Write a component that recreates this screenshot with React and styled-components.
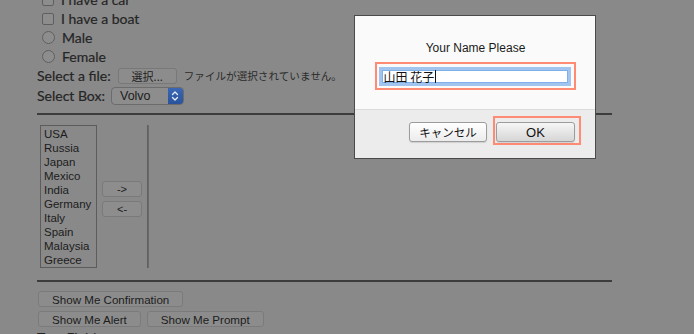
import React from "react";
import styled, { createGlobalStyle } from "styled-components";

const GlobalStyle = createGlobalStyle`
  html, body { margin: 0; padding: 0; background: #898989; overflow: hidden; }
  body { width: 694px; height: 334px; }
  * { box-sizing: border-box; }
`;

const Page = styled.div`
  position: relative;
  width: 694px;
  height: 334px;
  overflow: hidden;
  background: #898989;
  font-family: Lato, "DejaVu Sans", sans-serif;
  color: #252525;
`;

const Content = styled.div`
  margin-top: -10px;
  padding-left: 37px;
  width: 612px;
`;

const OptionRow = styled.div`
  display: flex;
  align-items: center;
  gap: 7px;
  height: 19px;
  padding-left: 5px;
  font-size: 14px;
  -webkit-text-stroke: 0.2px #252525;
`;

const CheckBox = styled.span`
  width: 12px;
  height: 12px;
  border: 1px solid #5f5f5f;
  border-radius: 2px;
  background: #8d8d8d;
`;

const Radio = styled.span`
  width: 13px;
  height: 13px;
  border: 1px solid #5f5f5f;
  border-radius: 50%;
  background: #8d8d8d;
`;

const FieldRow = styled.div`
  display: flex;
  align-items: center;
  height: ${(p) => p.$h || 19}px;
  font-size: 14px;
`;

const FieldLabel = styled.span`
  margin-right: ${(p) => p.$gap || 6}px;
  white-space: nowrap;
  -webkit-text-stroke: 0.2px #252525;
`;

const FileButton = styled.span`
  display: flex;
  align-items: center;
  justify-content: center;
  width: 59px;
  height: 16px;
  border: 1px solid #787878;
  border-radius: 3px;
  background: #8c8c8c;
  font-family: "Noto Sans CJK JP", sans-serif;
  font-size: 11px;
  color: #222;
`;

const FileNote = styled.span`
  margin-left: 7px;
  font-family: "Noto Sans CJK JP", sans-serif;
  font-size: 10.6px;
  color: #2b2b2b;
  white-space: nowrap;
`;

const SelectBox = styled.div`
  display: flex;
  width: 73px;
  height: 18px;
  border: 1px solid #6c6c6c;
  border-radius: 4px;
  background: #8d8d8d;
  overflow: hidden;
`;

const SelectValue = styled.span`
  flex: 1;
  display: flex;
  align-items: center;
  padding-left: 8px;
  font-family: "Liberation Sans", Arial, sans-serif;
  font-size: 12.5px;
  color: #1c1c1c;
`;

const SelectArrow = styled.span`
  width: 15px;
  display: flex;
  align-items: center;
  justify-content: center;
  background: linear-gradient(#3a66b4, #2a539c);
`;

const Rule = styled.div`
  height: 2px;
  width: 575px;
  background: #3c3c3c;
  margin-top: ${(p) => p.$mt}px;
`;

const TransferArea = styled.div`
  display: flex;
  gap: 5px;
  margin-top: 10px;
  padding-left: 3px;
  height: 143px;
`;

const ListBox = styled.div`
  width: 57px;
  border: 1px solid #5c5c5c;
  padding: 1px 0 0 3px;
  font-family: "Liberation Sans", Arial, sans-serif;
  font-size: 11.5px;
  line-height: 14px;
  color: #1c1c1c;
`;

const MoveButtons = styled.div`
  display: flex;
  flex-direction: column;
  gap: 4px;
  align-self: center;
  margin-top: 4px;
`;

const SmallButton = styled.span`
  display: flex;
  align-items: center;
  justify-content: center;
  width: 40px;
  height: 16px;
  border: 1px solid #7a7a7a;
  border-radius: 3px;
  background: #8d8d8d;
  font-family: "Liberation Sans", Arial, sans-serif;
  font-size: 11px;
  color: #1c1c1c;
`;

const EmptyList = styled.div`
  width: 2px;
  border-left: 1px solid #606060;
  border-right: 1px solid #6a6a6a;
`;

const ButtonRow = styled.div`
  display: flex;
  gap: 6px;
  margin-top: ${(p) => p.$mt}px;
  padding-left: 1px;
`;

const PageButton = styled.span`
  display: flex;
  align-items: center;
  height: 16px;
  padding: 0 13px;
  border: 1px solid #7b7b7b;
  border-radius: 3px;
  background: #8c8c8c;
  font-family: "Liberation Sans", Arial, sans-serif;
  font-size: 11.6px;
  color: #1c1c1c;
  white-space: nowrap;
`;

const TailLabel = styled.div`
  margin-top: 2px;
  font-size: 14px;
`;

const Dialog = styled.div`
  position: absolute;
  left: 354px;
  top: 15px;
  width: 242px;
  height: 144px;
  border: 1px solid #4a4a4a;
  display: flex;
  flex-direction: column;
  font-family: "Liberation Sans", Arial, "Noto Sans CJK JP", sans-serif;
  color: #1a1a1a;
`;

const DialogBody = styled.div`
  height: 93px;
  background: #fafafa;
  display: flex;
  flex-direction: column;
  align-items: center;
  padding-top: 25px;
`;

const DialogTitle = styled.div`
  font-size: 12px;
  line-height: 15px;
  margin-left: 1px;
`;

const Highlight = styled.div`
  border: 2px solid #ff8b75;
  padding: ${(p) => p.$pad};
  margin-top: ${(p) => p.$mt || 0}px;
`;

const NameInput = styled.div`
  width: 192px;
  height: 19px;
  background: #fff;
  border: 3px solid #a2c5ef;
  box-shadow: inset 0 0 0 1px #7fb0ea;
  display: flex;
  align-items: center;
  padding-left: 2px;
  font-family: "Noto Sans CJK JP", sans-serif;
  font-size: 12px;
  color: #111;
`;

const Caret = styled.span`
  width: 1px;
  height: 13px;
  background: #111;
  margin-left: 1px;
`;

const DialogFooter = styled.div`
  flex: 1;
  background: #ececec;
  border-top: 1px solid #dcdcdc;
  display: flex;
  justify-content: flex-end;
  align-items: flex-start;
  gap: 6px;
  padding: 6px 14px 0 0;
`;

const DialogButton = styled.span`
  display: flex;
  align-items: center;
  justify-content: center;
  width: ${(p) => p.$w}px;
  height: 20px;
  margin-top: ${(p) => p.$mt || 0}px;
  border: 1px solid #9c9c9c;
  border-radius: 3px;
  background: ${(p) =>
    p.$primary
      ? "linear-gradient(#f6f6f6, #d6d6d6)"
      : "linear-gradient(#ffffff, #ececec)"};
  box-shadow: 0 1px 1px rgba(0, 0, 0, 0.12);
  font-family: ${(p) =>
    p.$primary ? '"Liberation Sans", Arial, sans-serif' : '"Noto Sans CJK JP", sans-serif'};
  font-size: ${(p) => (p.$primary ? 13 : 11.5)}px;
  color: #111;
`;

const countries = ["USA", "Russia", "Japan", "Mexico", "India", "Germany", "Italy", "Spain", "Malaysia", "Greece"];

export default function App() {
  return (
    <Page>
      <GlobalStyle />
      <Content>
        <OptionRow><CheckBox /><span>I have a car</span></OptionRow>
        <OptionRow><CheckBox /><span>I have a boat</span></OptionRow>
        <OptionRow><Radio /><span>Male</span></OptionRow>
        <OptionRow><Radio /><span>Female</span></OptionRow>
        <FieldRow>
          <FieldLabel $gap={7}>Select a file:</FieldLabel>
          <FileButton>選択...</FileButton>
          <FileNote>ファイルが選択されていません。</FileNote>
        </FieldRow>
        <FieldRow $h={21}>
          <FieldLabel $gap={6}>Select Box:</FieldLabel>
          <SelectBox>
            <SelectValue>Volvo</SelectValue>
            <SelectArrow>
              <svg width="8" height="12" viewBox="0 0 8 12" fill="none" stroke="#e8eef8" strokeWidth="1.3" strokeLinecap="round" strokeLinejoin="round">
                <path d="M1.5 4.5 L4 2 L6.5 4.5" />
                <path d="M1.5 7.5 L4 10 L6.5 7.5" />
              </svg>
            </SelectArrow>
          </SelectBox>
        </FieldRow>
        <Rule $mt={7} />
        <TransferArea>
          <ListBox>
            {countries.map((c) => (
              <div key={c}>{c}</div>
            ))}
          </ListBox>
          <MoveButtons>
            <SmallButton>-&gt;</SmallButton>
            <SmallButton>&lt;-</SmallButton>
          </MoveButtons>
          <EmptyList />
        </TransferArea>
        <Rule $mt={12} />
        <ButtonRow $mt={9}>
          <PageButton>Show Me Confirmation</PageButton>
        </ButtonRow>
        <ButtonRow $mt={4}>
          <PageButton>Show Me Alert</PageButton>
          <PageButton>Show Me Prompt</PageButton>
        </ButtonRow>
        <TailLabel>Text Field:</TailLabel>
      </Content>

      <Dialog>
        <DialogBody>
          <DialogTitle>Your Name Please</DialogTitle>
          <Highlight $pad="3px 3px 2px 2px" $mt={6}>
            <NameInput>
              山田 花子<Caret />
            </NameInput>
          </Highlight>
        </DialogBody>
        <DialogFooter>
          <DialogButton $w={78} $mt={6}>キャンセル</DialogButton>
          <Highlight $pad="4px 4px 1px 1px">
            <DialogButton $w={79} $primary>OK</DialogButton>
          </Highlight>
        </DialogFooter>
      </Dialog>
    </Page>
  );
}
